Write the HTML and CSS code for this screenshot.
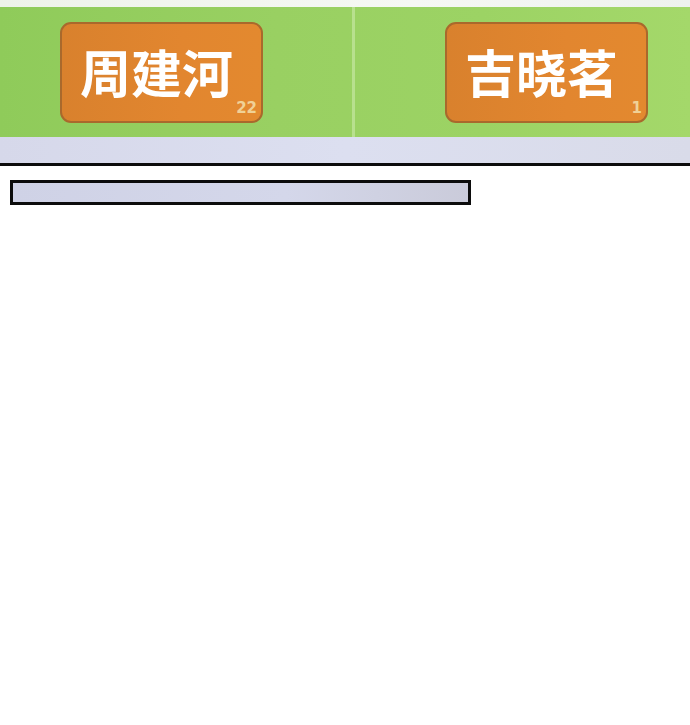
FILE: index.html
```html
<!DOCTYPE html>
<html lang="zh-CN">
<head>
    <meta charset="UTF-8">
    <meta name="viewport" content="width=device-width, initial-scale=1.0">
    <title>名单</title>
    <link rel="stylesheet" href="styles.css">
</head>
<body>
    <div class="top-strip"></div>
    <div class="board">
        <div class="half left">
            <div class="tag">
                <span class="name">周建河</span>
                <span class="count">22</span>
            </div>
        </div>
        <div class="divider"></div>
        <div class="half right">
            <div class="tag">
                <span class="name">吉晓茗</span>
                <span class="count">1</span>
            </div>
        </div>
    </div>
    <div class="shelf"></div>
    <div class="rule"></div>
    <div class="bar"></div>
</body>
</html>
```

FILE: styles.css
```css
body {
    margin: 0;
    background: #ffffff;
    font-family: "Noto Sans CJK SC", "Noto Sans", sans-serif;
}
.top-strip {
    height: 7px;
    background: linear-gradient(90deg, #eef3ea, #f6f8f4 60%, #eef2ee);
}
.board {
    display: flex;
    height: 130px;
    background: linear-gradient(90deg, #8fcb5a 0%, #99d062 40%, #9cd364 70%, #a4d86a 100%);
}
.half {
    display: flex;
    align-items: flex-start;
    padding-top: 15px;
    box-sizing: border-box;
}
.half.left {
    width: 352px;
    padding-left: 60px;
}
.half.right {
    flex: 1;
    padding-left: 90px;
}
.divider {
    width: 3px;
    background: #b8e08e;
}
.tag {
    position: relative;
    width: 203px;
    height: 101px;
    box-sizing: border-box;
    border: 2px solid #a9692c;
    border-radius: 11px;
    background: linear-gradient(90deg, #d9812d, #e2862f 60%, #e3892f);
    display: flex;
    justify-content: center;
    align-items: center;
}
.name {
    color: #ffffff;
    font-size: 51px;
    line-height: 1;
    font-weight: 700;
    margin-right: 10px;
    margin-top: -2px;
}
.count {
    position: absolute;
    right: 4px;
    bottom: 5px;
    font-family: "DejaVu Sans", sans-serif;
    font-size: 15px;
    line-height: 1;
    font-weight: 700;
    color: #f0d196;
}
.shelf {
    height: 26px;
    background: linear-gradient(90deg, #d6d8ea, #dcdff0 50%, #d9dbe9);
}
.rule {
    height: 3px;
    background: #0c0c0c;
}
.bar {
    width: 461px;
    height: 25px;
    box-sizing: border-box;
    margin: 14px 0 0 10px;
    border: 3px solid #0c0c0c;
    background: linear-gradient(90deg, #cfd2e6, #d4d7ea 60%, #cacbda);
}
```
